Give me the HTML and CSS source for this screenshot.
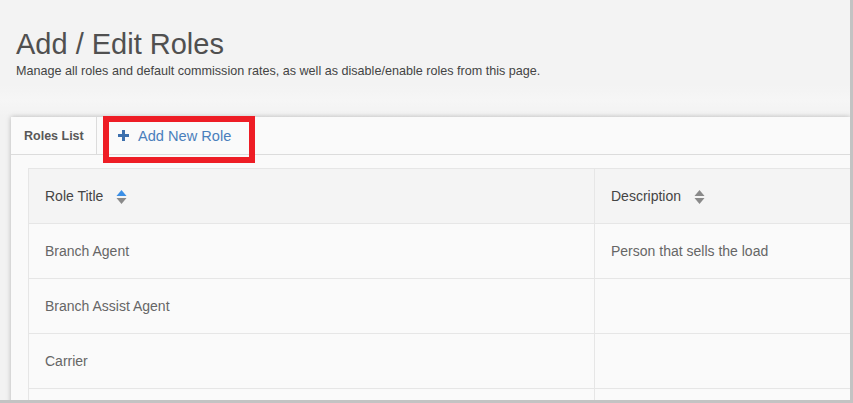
FILE: index.html
```html
<!DOCTYPE html>
<html>
<head>
<meta charset="utf-8">
<link rel="stylesheet" href="styles.css">
</head>
<body>
<div class="window">
  <header class="page-head">
    <h1 class="title">Add / Edit Roles</h1>
    <p class="subtitle">Manage all roles and default commission rates, as well as disable/enable roles from this page.</p>
  </header>
  <section class="panel">
    <nav class="tabs">
      <div class="tab tab-active">Roles List</div>
      <div class="tab tab-add">
        <svg class="plus" width="11" height="11" viewBox="0 0 11 11"><path d="M4 0h3v4h4v3H7v4H4V7H0V4h4z" fill="#3d70ad"/></svg>
        <span>Add New Role</span>
        <div class="highlight"></div>
      </div>
    </nav>
    <div class="table-wrap">
      <table class="roles">
        <thead>
          <tr>
            <th class="col-title"><span>Role Title</span>
              <svg class="sort" width="11" height="16" viewBox="0 0 11 16"><path d="M5.5 1L10.5 7H0.5z" fill="#3b8fe6"/><path d="M0.5 9H10.5L5.5 15z" fill="#8a8a8a"/></svg>
            </th>
            <th class="col-desc"><span>Description</span>
              <svg class="sort" width="11" height="16" viewBox="0 0 11 16"><path d="M5.5 1L10.5 7H0.5z" fill="#8a8a8a"/><path d="M0.5 9H10.5L5.5 15z" fill="#8a8a8a"/></svg>
            </th>
          </tr>
        </thead>
        <tbody>
          <tr><td>Branch Agent</td><td>Person that sells the load</td></tr>
          <tr><td>Branch Assist Agent</td><td></td></tr>
          <tr><td>Carrier</td><td></td></tr>
          <tr><td>&nbsp;</td><td></td></tr>
        </tbody>
      </table>
    </div>
  </section>
</div>
</body>
</html>
```

FILE: styles.css
```css
* { box-sizing: border-box; }
html, body { margin: 0; padding: 0; }
body {
  font-family: "Liberation Sans", Arial, sans-serif;
  background: #f3f3f3;
}
.window {
  width: 853px;
  height: 403px;
  overflow: hidden;
  border-right: 3px solid #c3c3c3;
  border-bottom: 3px solid #c3c3c3;
  background: linear-gradient(#f3f3f3 0, #f3f3f3 85px, #f6f6f6 100px, #f2f2f2 117px);
  display: flex;
  flex-direction: column;
}
.page-head {
  padding: 28px 0 0 16px;
  height: 117px;
  flex: none;
}
.title {
  margin: 0;
  font-size: 29px;
  font-weight: normal;
  line-height: 32px;
  color: #505050;
}
.subtitle {
  margin: 4px 0 0;
  font-size: 12.6px;
  line-height: 15px;
  color: #444;
}
.panel {
  margin-left: 11px;
  flex: 1;
  background: #fafafa;
  box-shadow: 0 0 5px rgba(0,0,0,0.25);
  display: flex;
  flex-direction: column;
  min-width: 0;
}
.tabs {
  display: flex;
  height: 38px;
  border-bottom: 1px solid #dcdcdc;
  flex: none;
}
.tab {
  display: flex;
  align-items: center;
  height: 37px;
}
.tab-active {
  width: 86px;
  padding-left: 13px;
  border-right: 1px solid #dcdcdc;
  font-size: 12.5px;
  font-weight: bold;
  color: #585858;
  background: #fbfbfb;
}
.tab-add {
  position: relative;
  padding-left: 21px;
  gap: 9px;
  font-size: 14.6px;
  color: #4a7fbc;
}
.plus { display: block; }
.highlight {
  position: absolute;
  left: 6px;
  top: -1px;
  width: 152px;
  height: 47px;
  border: 6px solid #ee1d25;
}
.table-wrap {
  margin: 13px 0 0 17px;
  overflow: hidden;
  flex: 1;
}
.roles {
  border-collapse: collapse;
  width: 1000px;
  font-size: 14px;
}
.roles th, .roles td {
  height: 55px;
  padding: 0 0 0 16px;
  text-align: left;
  border: 1px solid #e6e6e6;
  vertical-align: middle;
}
.roles th {
  background: #f4f4f4;
  font-weight: normal;
  color: #444;
}
.roles th span { vertical-align: middle; }
.sort { vertical-align: middle; margin-left: 9px; }
.roles td {
  background: #fafafa;
  color: #666;
}
.col-title { width: 566px; }
```
